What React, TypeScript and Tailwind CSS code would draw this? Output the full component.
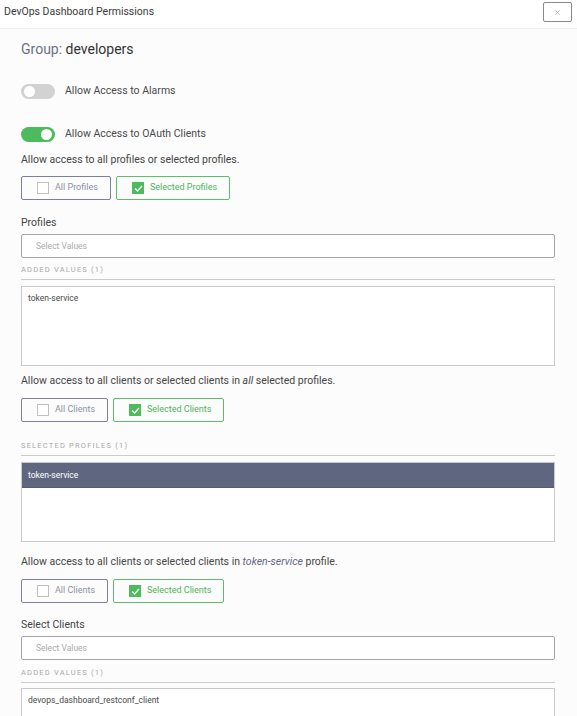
import { FC, ReactNode } from "react";

const font = { fontFamily: "Roboto, 'Liberation Sans', sans-serif" };

const Toggle: FC<{ on?: boolean; label: string; className?: string }> = ({ on, label, className }) => (
  <div className={`flex items-center h-[16px] ${className ?? ""}`}>
    <div
      className={`relative w-[34px] h-[15px] rounded-full ${on ? "bg-[#4cbb5b]" : "bg-[#d2d2d2]"}`}
    >
      <div
        className={`absolute top-[2px] w-[11px] h-[11px] rounded-full bg-white ${on ? "right-[3px]" : "left-[3px]"}`}
      />
    </div>
    <span className="ml-[10px] text-[10.5px] text-[#4a4a4a]">{label}</span>
  </div>
);

const Check: FC<{ checked?: boolean }> = ({ checked }) =>
  checked ? (
    <span className="w-[12px] h-[12px] bg-[#4cbb5b] flex items-center justify-center">
      <svg viewBox="0 0 12 12" className="w-[11px] h-[11px]">
        <path d="M2.3 6 L5 8.7 L9.8 3.3" fill="none" stroke="white" strokeWidth="1.5" />
      </svg>
    </span>
  ) : (
    <span className="w-[12px] h-[12px] border border-[#c0c0c0] bg-white" />
  );

const ChoiceRow: FC<{ a: string; b: string; aw: string; bw: string; className?: string }> = ({
  a,
  b,
  aw,
  bw,
  className,
}) => (
  <div className={`flex gap-[5px] ${className ?? ""}`}>
    <div
      className={`h-[24px] ${aw} flex items-center pl-[15px] gap-[6px] border border-[#7d8197] rounded-[2px] text-[9px] text-[#8d91a3]`}
    >
      <Check />
      {a}
    </div>
    <div
      className={`h-[24px] ${bw} flex items-center pl-[15px] gap-[6px] border border-[#5cbf69] rounded-[2px] text-[9px] text-[#4cb45a]`}
    >
      <Check checked />
      {b}
    </div>
  </div>
);

const SectionTitle: FC<{ children: ReactNode; className?: string }> = ({ children, className }) => (
  <>
    <div
      className={`h-[10px] leading-[10px] text-[7.5px] tracking-[1.2px] text-[#a8a8a8] uppercase ${className ?? ""}`}
    >
      {children}
    </div>
    <div className="mt-[4px] h-px bg-[#cccccc]" />
  </>
);

const Input: FC<{ className?: string }> = ({ className }) => (
  <div
    className={`h-[24px] border border-[#a5a5a5] rounded-[2px] flex items-center pl-[14px] text-[8.5px] text-[#aaaaaa] bg-white ${className ?? ""}`}
  >
    Select Values
  </div>
);

const Text: FC<{ children: ReactNode; className?: string }> = ({ children, className }) => (
  <div className={`h-[14px] leading-[14px] text-[10.5px] text-[#454545] ${className ?? ""}`}>
    {children}
  </div>
);

export default function App() {
  return (
    <div className="w-[577px] h-[716px] overflow-hidden bg-[#fcfcfc]" style={font}>
      {/* Header */}
      <div className="h-[29px] bg-white border-b border-[#efefef] flex items-start justify-between pl-[4px] pr-[5px]">
        <span className="mt-[4px] text-[10.5px] text-[#3a3a3a]">DevOps Dashboard Permissions</span>
        <button className="mt-[2px] w-[29px] h-[20px] border border-[#8a8a8a] rounded-[2px] flex items-center justify-center bg-white">
          <svg viewBox="0 0 10 10" className="w-[7px] h-[7px]">
            <path d="M2 2 L8 8 M8 2 L2 8" stroke="#aaa" strokeWidth="1.2" />
          </svg>
        </button>
      </div>

      <div className="pl-[21px] pr-[22px]">
        <div className="mt-[12px] h-[17px] leading-[17px] text-[14px]">
          <span className="text-[#6b7088]">Group:</span> <span className="text-[#333]">developers</span>
        </div>

        <Toggle label="Allow Access to Alarms" className="mt-[25px]" />
        <Toggle on label="Allow Access to OAuth Clients" className="mt-[27px]" />

        <Text className="mt-[11px]">Allow access to all profiles or selected profiles.</Text>
        <ChoiceRow a="All Profiles" b="Selected Profiles" aw="w-[90px]" bw="w-[114px]" className="mt-[9px]" />

        <Text className="mt-[16px]">Profiles</Text>
        <Input className="mt-[4px]" />
        <SectionTitle className="mt-[7px]">Added Values (1)</SectionTitle>
        <div className="mt-[6px] h-[80px] border border-[#c9c9c9] bg-white px-[6px] pt-[5px] text-[8.5px] text-[#4a4a4a]">
          token-service
        </div>

        <Text className="mt-[8px]">
          Allow access to all clients or selected clients in <i>all</i> selected profiles.
        </Text>
        <ChoiceRow a="All Clients" b="Selected Clients" aw="w-[87px]" bw="w-[111px]" className="mt-[10px]" />

        <SectionTitle className="mt-[19px]">Selected Profiles (1)</SectionTitle>
        <div className="mt-[6px] h-[80px] border border-[#c9c9c9] bg-white">
          <div className="h-[25px] bg-[#5f6680] border-b border-[#565c74] flex items-center px-[6px] text-[8.5px] text-white">
            token-service
          </div>
        </div>

        <Text className="mt-[13px]">
          Allow access to all clients or selected clients in{" "}
          <i className="text-[#5f6680]">token-service</i> profile.
        </Text>
        <ChoiceRow a="All Clients" b="Selected Clients" aw="w-[87px]" bw="w-[111px]" className="mt-[10px]" />

        <Text className="mt-[15px]">Select Clients</Text>
        <Input className="mt-[4px]" />
        <SectionTitle className="mt-[8px]">Added Values (1)</SectionTitle>
        <div className="mt-[5px] h-[80px] border border-[#c9c9c9] bg-white px-[6px] pt-[5px] text-[8.5px] text-[#4a4a4a]">
          devops_dashboard_restconf_client
        </div>
      </div>
    </div>
  );
}
